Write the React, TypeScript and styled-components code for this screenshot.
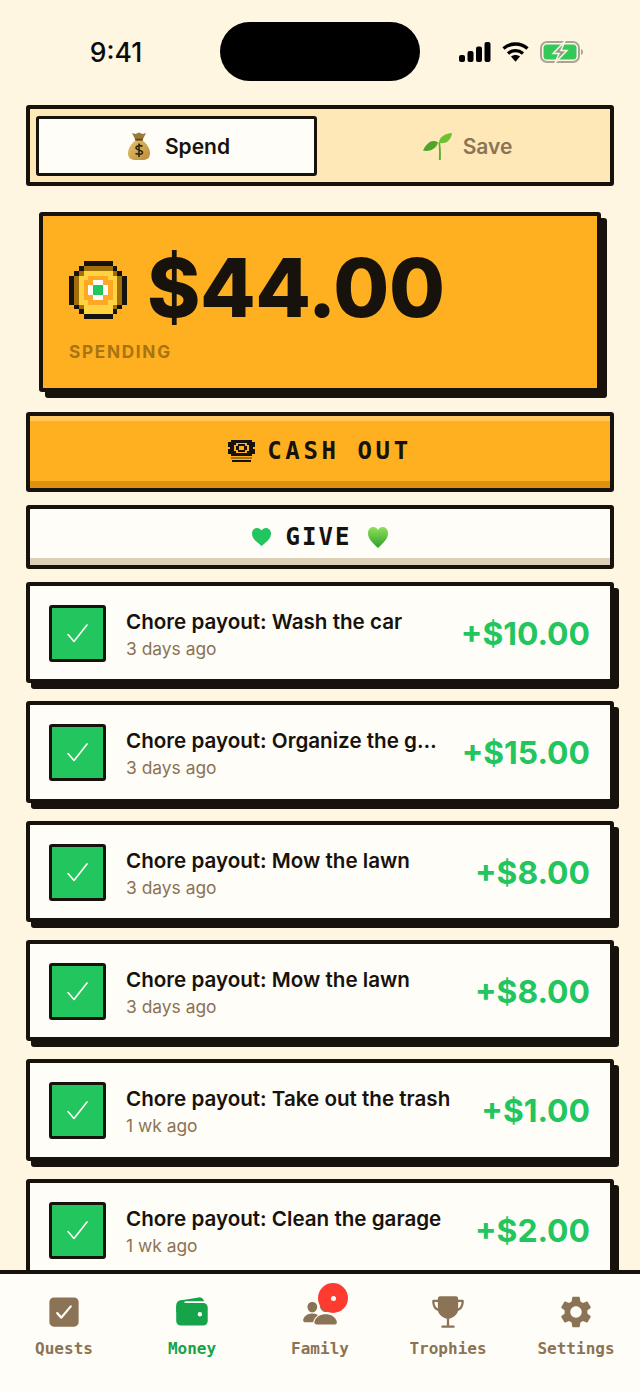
import styled, { createGlobalStyle } from 'styled-components';
import { IoCheckbox, IoPeople, IoTrophy, IoWallet } from 'react-icons/io5';
import { MdSettings } from 'react-icons/md';

const ink = '#17120c';
const brown = '#8b7355';
const green = '#22c55e';
const paper = '#fffdf8';

const GlobalStyle = createGlobalStyle`
    html, body {
        margin: 0;
        padding: 0;
        background: #fff6e2;
    }
    * {
        box-sizing: border-box;
    }
`;

const Page = styled.div`
    width: 640px;
    height: 1391px;
    display: flex;
    flex-direction: column;
    overflow: hidden;
    background: #fff6e2;
    font-family: Inter, 'Liberation Sans', sans-serif;
    color: ${ink};
`;

const StatusBar = styled.div`
    flex: none;
    height: 105px;
    display: grid;
    grid-template-columns: 220px 200px 220px;
    padding-top: 22px;
    align-items: start;
`;

const Clock = styled.div`
    height: 59px;
    display: flex;
    align-items: center;
    justify-content: center;
    padding-left: 12px;
    font-size: 26.5px;
    font-weight: 500;
    color: #0b0b0b;
`;

const Island = styled.div`
    height: 59px;
    background: #000;
    border-radius: 30px;
`;

const StatusIcons = styled.div`
    height: 59px;
    display: flex;
    align-items: center;
    gap: 11px;
    padding-left: 39px;
`;

const Content = styled.div`
    flex: 1;
    min-height: 0;
    overflow: hidden;
    padding: 0 26px;
    display: flex;
    flex-direction: column;
`;

const Segment = styled.div`
    flex: none;
    height: 81px;
    border: 4px solid ${ink};
    border-radius: 3px;
    background: #ffe8b8;
    padding: 7px 0 6px 6px;
    display: grid;
    grid-template-columns: 281px 1fr;
`;

const SegmentTab = styled.div<{ $active?: boolean }>`
    display: flex;
    align-items: center;
    justify-content: center;
    gap: ${(p) => (p.$active ? 15 : 11)}px;
    padding-left: ${(p) => (p.$active ? 5 : 8)}px;
    font-size: 21px;
    font-weight: 600;
    border: 3px solid ${(p) => (p.$active ? ink : 'transparent')};
    border-radius: 3px;
    background: ${(p) => (p.$active ? paper : 'transparent')};
    color: ${(p) => (p.$active ? ink : brown)};
`;

const BalanceCard = styled.div`
    flex: none;
    height: 180px;
    margin: 26px 13px 0;
    border: 4px solid ${ink};
    border-radius: 3px;
    background: #ffb020;
    box-shadow: 6px 6px 0 ${ink};
    padding: 45px 26px 0;
`;

const BalanceRow = styled.div`
    display: flex;
    align-items: center;
    gap: 20px;
    height: 58px;
`;

const BalanceAmount = styled.div`
    font-size: 81px;
    font-weight: 800;
    letter-spacing: -0.5px;
    line-height: 58px;
    padding-bottom: 4px;
    color: ${ink};
`;

const BalanceLabel = styled.div`
    margin-top: 22px;
    font-size: 17.2px;
    line-height: 22px;
    font-weight: 700;
    letter-spacing: 1.7px;
    color: #a87410;
`;

const BigButton = styled.div<{ $tone: 'gold' | 'plain' }>`
    flex: none;
    height: ${(p) => (p.$tone === 'gold' ? 80 : 64)}px;
    margin-top: ${(p) => (p.$tone === 'gold' ? 20 : 13)}px;
    border: 4px solid ${ink};
    border-radius: 3px;
    background: ${(p) => (p.$tone === 'gold' ? '#ffb020' : paper)};
    box-shadow: ${(p) =>
        p.$tone === 'gold'
            ? 'inset 0 5px 0 #ffc75e, inset 0 -7px 0 #e0900f'
            : 'inset 0 -7px 0 #ddd0b8'};
    padding-bottom: ${(p) => (p.$tone === 'gold' ? 2 : 0)}px;
    display: flex;
    align-items: center;
    justify-content: center;
`;

const PixelLabel = styled.span<{ $spacing: number }>`
    font-family: 'DejaVu Sans Mono', 'Liberation Mono', monospace;
    font-weight: 700;
    font-size: 24px;
    letter-spacing: ${(p) => p.$spacing}px;
    white-space: pre;
    color: ${ink};
`;

const CashLabel = styled(PixelLabel)`
    margin-left: 12px;
`;

const GiveLabel = styled(PixelLabel)`
    margin: 0 17px 0 15px;
`;

const List = styled.div`
    margin-top: 13px;
    display: flex;
    flex-direction: column;
    gap: 18px;
`;

const Row = styled.div`
    flex: none;
    height: 101.33px;
    border: 4px solid ${ink};
    border-radius: 3px;
    background: ${paper};
    box-shadow: 5px 6px 0 ${ink};
    padding: 2px 20px 0 19px;
    display: flex;
    align-items: center;
`;

const CheckTile = styled.div`
    flex: none;
    width: 57px;
    height: 57px;
    border: 3px solid ${ink};
    border-radius: 3px;
    background: ${green};
    display: flex;
    align-items: center;
    justify-content: center;
`;

const RowText = styled.div`
    flex: 1;
    min-width: 0;
    margin: 0 22px 0 20px;
    padding-top: 3px;
`;

const RowTitle = styled.div`
    font-size: 20.6px;
    line-height: 28px;
    font-weight: 600;
    white-space: nowrap;
    overflow: hidden;
    text-overflow: ellipsis;
    color: ${ink};
`;

const RowTime = styled.div`
    font-size: 17.4px;
    line-height: 26px;
    color: ${brown};
`;

const RowAmount = styled.div`
    flex: none;
    font-size: 31.8px;
    font-weight: 700;
    color: ${green};
`;

const TabBar = styled.nav`
    flex: none;
    height: 121px;
    border-top: 4px solid ${ink};
    background: ${paper};
    display: grid;
    grid-template-columns: repeat(5, 1fr);
`;

const TabItem = styled.div<{ $active?: boolean }>`
    position: relative;
    padding-top: 20px;
    display: flex;
    flex-direction: column;
    align-items: center;
    color: ${(p) => (p.$active ? '#16a34a' : brown)};
`;

const TabIcon = styled.div`
    height: 36px;
    display: flex;
    align-items: center;
    justify-content: center;
`;

const TabLabel = styled.div`
    margin-top: 8px;
    font-family: 'DejaVu Sans Mono', 'Liberation Mono', monospace;
    font-weight: 700;
    font-size: 16px;
    line-height: 22px;
`;

const Badge = styled.div`
    position: absolute;
    top: 9px;
    left: 62px;
    width: 30px;
    height: 30px;
    border-radius: 50%;
    background: #ff3b30;
    display: flex;
    align-items: center;
    justify-content: center;

    &::after {
        content: '';
        width: 5px;
        height: 5px;
        border-radius: 50%;
        background: ${paper};
    }
`;

const coinRows = [
    '...KKKKKK...',
    '..KBBBBBBK..',
    '.KBYYYYYYBK.',
    'KBYYOOOOYYBK',
    'KBYOOWWOOYBK',
    'KBYOWGGWOYBK',
    'KBYOWGGWOYBK',
    'KBYOOWWOOYBK',
    'KBYYOOOOYYBK',
    '.KBYYYYYYBK.',
    '..KYYYYYYK..',
    '...KKKKKK...',
];

const coinColors: Record<string, string> = {
    K: ink,
    B: '#a06f0c',
    Y: '#ffd23f',
    O: '#ffa726',
    W: '#fffdf8',
    G: green,
};

function PixelCoin() {
    return (
        <svg width="58" height="58" viewBox="0 0 12 12" shapeRendering="crispEdges">
            {coinRows.map((row, y) =>
                row.split('').map((c, x) =>
                    coinColors[c] ? (
                        <rect key={`${x}-${y}`} x={x} y={y} width="1.02" height="1.02" fill={coinColors[c]} />
                    ) : null,
                ),
            )}
        </svg>
    );
}

function CashIcon() {
    return (
        <svg width="27" height="22" viewBox="0 0 27 22" shapeRendering="crispEdges">
            <path fill={ink} d="M3 0h21v2h3v5h-2v2h2v5h-3v2H3v-2H0V9h2V7H0V2h3z" />
            <path fill="#ffb020" d="M8 3h11v2h2v6h-2v2H8v-2H6V5h2z" />
            <path fill={ink} d="M10 4h7v2h2v4h-2v2h-7v-2H8V6h2z" />
            <rect x="11" y="6" width="5" height="4" fill="#ffb020" />
            <rect x="3" y="17" width="21" height="2" fill="#a87410" />
            <rect x="4" y="20" width="19" height="2" fill={ink} />
        </svg>
    );
}

function MoneyBag() {
    return (
        <svg width="22" height="28" viewBox="0 0 22 28">
            <defs>
                <linearGradient id="bag-fill" x1="0" y1="0" x2="1" y2="1">
                    <stop offset="0" stopColor="#e8c36a" />
                    <stop offset="1" stopColor="#b98a3a" />
                </linearGradient>
            </defs>
            <path fill="#9a7a3a" d="M4 1l3.500 1L11 .5 14.500 2 18 1l-3.500 7h-7z" />
            <path fill="url(#bag-fill)" d="M8 8h6c4 3 8 8 8 13 0 5-3 7-7 7H7c-4 0-7-2-7-7 0-5 4-10 8-13z" />
            <rect x="7" y="6.500" width="8" height="2.200" rx="1" fill="#6e4f1c" />
            <path fill="none" stroke="#2e2410" strokeWidth="1.600" d="M14.500 14.500c-1-1.200-6-1.300-6.500 1 -.5 3 6.500 1.800 6.500 5 0 2.200-5 2.200-7 .8M11 11.500v13.500" />
        </svg>
    );
}

function Seedling() {
    return (
        <svg width="29" height="27" viewBox="0 0 29 27">
            <path fill="#58b02c" d="M15.500 9.500c1-1.200 1.600 0 2 3.500.5 5 .5 9 .3 14h-2c.4-6 .2-12-.3-17.500z" />
            <path fill="#6cc133" d="M16 10C16 4 22 .5 29 0c-.5 6-5 11.500-13 10z" />
            <path fill="#4ea52a" d="M15 9.500C10 6 4 9 0 17.500c6 1.500 13-1 15-8z" />
        </svg>
    );
}

function FlatHeart() {
    return (
        <svg width="19" height="18" viewBox="0 0 19 18">
            <path fill={green} d="M9.500 18C4 13.500 0 10.500 0 5.500 0 2.300 2.300 0 5 0c2 0 3.500 1 4.500 2.500C10.500 1 12 0 14 0c2.700 0 5 2.300 5 5.500 0 5-4 8-9.500 12.500z" />
        </svg>
    );
}

function GlossHeart() {
    return (
        <svg width="20" height="21" viewBox="0 0 20 21">
            <defs>
                <linearGradient id="heart-fill" x1="0" y1="0" x2="0" y2="1">
                    <stop offset="0" stopColor="#8fe05a" />
                    <stop offset="1" stopColor="#2c9e2c" />
                </linearGradient>
            </defs>
            <path fill="url(#heart-fill)" d="M10 21C4 15.500 0 11.500 0 6 0 2.700 2.300 0 5.200 0 7.300 0 9 1.200 10 3c1-1.800 2.700-3 4.800-3C17.700 0 20 2.700 20 6c0 5.500-4 9.500-10 15z" />
        </svg>
    );
}

function SignalIcon() {
    return (
        <svg width="32" height="20" viewBox="0 0 32 20" fill="#000">
            <rect x="0" y="13" width="6" height="7" rx="2" />
            <rect x="8.500" y="9" width="6" height="11" rx="2" />
            <rect x="17" y="4.500" width="6" height="15.500" rx="2" />
            <rect x="25.500" y="0" width="6" height="20" rx="2" />
        </svg>
    );
}

function WifiIcon() {
    return (
        <svg width="27" height="20" viewBox="0 0 27 20" fill="none" stroke="#000" strokeWidth="3.400">
            <path d="M1.500 6.500c7-6 17-6 24 0" />
            <path d="M6 11.500c4.500-3.800 10.500-3.800 15 0" />
            <path fill="#000" stroke="none" d="M9 14.500c2.700-2 6.300-2 9 0l-4.500 5.200z" />
        </svg>
    );
}

function BatteryIcon() {
    return (
        <svg width="44" height="22" viewBox="0 0 44 22">
            <rect x="1" y="1" width="38" height="20" rx="6" fill="none" stroke="#a8a596" strokeWidth="2" />
            <rect x="3.500" y="3.500" width="33" height="15" rx="3.500" fill="#34c759" />
            <path d="M41 8c1.500.5 2 1.500 2 3s-.5 2.500-2 3z" fill="#a8a596" />
            <path d="M25 0L13 12.500h6L15 22l12-12.500h-6z" fill="#9a9a90" stroke="#fff6e2" strokeWidth="1.500" />
        </svg>
    );
}

function Check() {
    return (
        <svg width="21" height="19" viewBox="0 0 21 19" fill="none" stroke="#fffdf8" strokeWidth="1.600" strokeLinecap="round" strokeLinejoin="round">
            <path d="M1 10.500l6 7L20 1" />
        </svg>
    );
}

const payouts = [
    { title: 'Chore payout: Wash the car', time: '3 days ago', amount: '+$10.00' },
    { title: 'Chore payout: Organize the garage', time: '3 days ago', amount: '+$15.00' },
    { title: 'Chore payout: Mow the lawn', time: '3 days ago', amount: '+$8.00' },
    { title: 'Chore payout: Mow the lawn', time: '3 days ago', amount: '+$8.00' },
    { title: 'Chore payout: Take out the trash', time: '1 wk ago', amount: '+$1.00' },
    { title: 'Chore payout: Clean the garage', time: '1 wk ago', amount: '+$2.00' },
];

export default function App() {
    return (
        <Page>
            <GlobalStyle />
            <StatusBar>
                <Clock>9:41</Clock>
                <Island />
                <StatusIcons>
                    <SignalIcon />
                    <WifiIcon />
                    <BatteryIcon />
                </StatusIcons>
            </StatusBar>

            <Content>
                <Segment>
                    <SegmentTab $active>
                        <MoneyBag />
                        Spend
                    </SegmentTab>
                    <SegmentTab>
                        <Seedling />
                        Save
                    </SegmentTab>
                </Segment>

                <BalanceCard>
                    <BalanceRow>
                        <PixelCoin />
                        <BalanceAmount>$44.00</BalanceAmount>
                    </BalanceRow>
                    <BalanceLabel>SPENDING</BalanceLabel>
                </BalanceCard>

                <BigButton $tone="gold">
                    <CashIcon />
                    <CashLabel $spacing={3.6}>CASH OUT</CashLabel>
                </BigButton>

                <BigButton $tone="plain">
                    <FlatHeart />
                    <GiveLabel $spacing={2}>GIVE</GiveLabel>
                    <GlossHeart />
                </BigButton>

                <List>
                    {payouts.map((p, i) => (
                        <Row key={i}>
                            <CheckTile>
                                <Check />
                            </CheckTile>
                            <RowText>
                                <RowTitle>{p.title}</RowTitle>
                                <RowTime>{p.time}</RowTime>
                            </RowText>
                            <RowAmount>{p.amount}</RowAmount>
                        </Row>
                    ))}
                </List>
            </Content>

            <TabBar>
                <TabItem>
                    <TabIcon>
                        <IoCheckbox size={36} />
                    </TabIcon>
                    <TabLabel>Quests</TabLabel>
                </TabItem>
                <TabItem $active>
                    <TabIcon>
                        <IoWallet size={36} />
                    </TabIcon>
                    <TabLabel>Money</TabLabel>
                </TabItem>
                <TabItem>
                    <TabIcon>
                        <IoPeople size={36} />
                    </TabIcon>
                    <TabLabel>Family</TabLabel>
                    <Badge />
                </TabItem>
                <TabItem>
                    <TabIcon>
                        <IoTrophy size={36} />
                    </TabIcon>
                    <TabLabel>Trophies</TabLabel>
                </TabItem>
                <TabItem>
                    <TabIcon>
                        <MdSettings size={38} />
                    </TabIcon>
                    <TabLabel>Settings</TabLabel>
                </TabItem>
            </TabBar>
        </Page>
    );
}
